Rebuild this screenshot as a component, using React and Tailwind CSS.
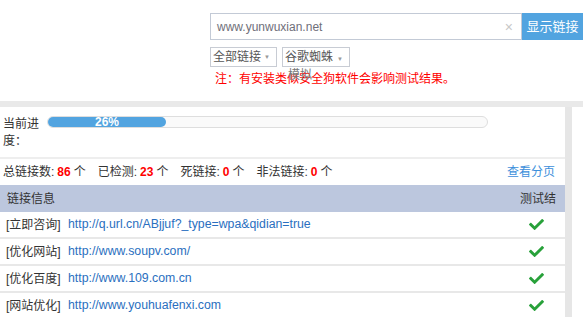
import React from "react";
import { FaCheck } from "react-icons/fa";

const rows = [
  ["[立即咨询]", "http://q.url.cn/ABjjuf?_type=wpa&qidian=true"],
  ["[优化网站]", "http://www.soupv.com/"],
  ["[优化百度]", "http://www.109.com.cn"],
  ["[网站优化]", "http://www.youhuafenxi.com"],
];

function Stat({ label, n }) {
  return (
    <span className="mr-[12px] whitespace-nowrap">
      {label}
      <span className="mx-[3px] font-bold text-[12px] text-[#ff0000]">{n}</span>
      个
    </span>
  );
}

export default function App() {
  return (
    <div
      className="w-[583px] h-[317px] overflow-hidden bg-white text-[12px] text-[#333] flex flex-col"
      style={{ fontFamily: '"Liberation Sans", "Noto Sans CJK SC", sans-serif' }}
    >
      {/* top */}
      <div className="h-[101px] shrink-0 pl-[210px] pt-[13px]">
        <div className="flex h-[27px]">
          <div className="flex-1 flex items-center border border-[#c3cad6] pl-[6px] pr-[8px]">
            <span className="flex-1 text-[12px] text-[#6f6f7a]">www.yunwuxian.net</span>
            <span className="text-[14px] text-[#c8c8c8] leading-none">×</span>
          </div>
          <div className="w-[61px] flex items-center justify-center bg-[#52a4e0] text-white text-[13px]">
            显示链接
          </div>
        </div>
        <div className="flex gap-[5px] mt-[7px] h-[20px]">
          <div className="w-[67px] h-[20px] border border-[#c8ccd4] flex items-center pl-[2px] text-[#555] leading-[18px] whitespace-nowrap">
            全部链接<span className="ml-[3px] text-[6px] text-[#999]">▼</span>
          </div>
          <div className="w-[68px] h-[20px] border border-[#c8ccd4] pl-[2px] text-[#555] leading-[16px] relative">
            <div className="whitespace-nowrap pt-[1px]">
              谷歌蜘蛛<span className="ml-[4px] text-[6px] text-[#999]">▼</span>
            </div>
            <div className="pl-[3px] text-[#777]">模拟</div>
          </div>
        </div>
        <div className="mt-[4px] pl-[5px] text-[#ff0000] leading-[16px]">
          注：有安装类似安全狗软件会影响测试结果。
        </div>
      </div>
      <div className="h-[6px] shrink-0 bg-[#e9e9e9]" />
      <div className="flex flex-1">
        <div className="w-[565px] bg-white">
          {/* progress */}
          <div className="flex h-[50px] pt-[8px]">
            <div className="w-[47px] pl-[3px] pr-[4px] leading-[17px] pt-[1px]">当前进度：</div>
            <div className="w-[441px] h-[12px] mt-[1px] rounded-full border border-[#dedede] bg-[#fafafa] relative">
              <div className="w-[118px] h-[10px] rounded-full bg-[#52a4e0] flex items-center justify-center text-white text-[12px] leading-none font-bold">
                26%
              </div>
            </div>
          </div>
          <div className="h-[2px] bg-[#eeeeee]" />
          <div className="h-[26px] flex items-center pl-[3px] pr-[10px]">
            <Stat label="总链接数:" n="86" />
            <Stat label="已检测:" n="23" />
            <Stat label="死链接:" n="0" />
            <Stat label="非法链接:" n="0" />
            <span className="ml-auto text-[#3d8fdb] text-[12px]">查看分页</span>
          </div>
          <div className="h-[27px] bg-[#bcc7de] flex items-center pl-[7px]">
            <span className="flex-1">链接信息</span>
            <span className="w-[37px] h-[16px] leading-[16px] overflow-hidden mr-[8px]">测试结果</span>
          </div>
          {rows.map(([a, b]) => (
            <div key={b} className="h-[27px] flex items-center border-b-2 border-[#e8e8e8] pl-[6px]">
              <span className="w-[62px]">{a}</span>
              <span className="flex-1 text-[12.3px] text-[#2a6fc0]">{b}</span>
              <span className="w-[55px] flex justify-start pl-[19px]">
                <FaCheck className="text-[#28a13a]" size={15} />
              </span>
            </div>
          ))}
        </div>
        <div className="w-[7px] bg-[#e6e6e6]" />
        <div className="flex-1 bg-white" />
      </div>
    </div>
  );
}
